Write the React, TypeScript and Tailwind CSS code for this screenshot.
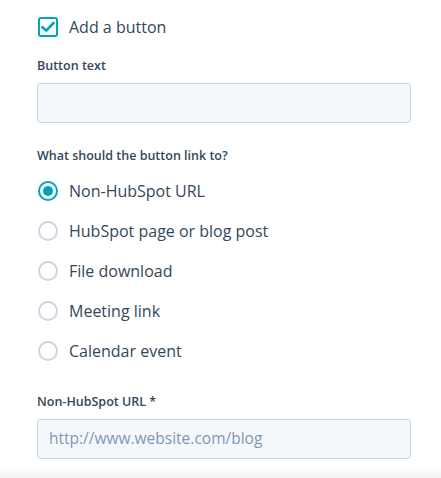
import React from 'react'

const options = [
    "Non-HubSpot URL",
    "HubSpot page or blog post",
    "File download",
    "Meeting link",
    "Calendar event",
];

const Radio = ({ checked }: { checked: boolean }) => (
    <span
        className={`flex h-5 w-5 shrink-0 items-center justify-center rounded-full border-2 bg-white ${checked ? "border-[#00a4bd]" : "border-[#cbd6e2]"}`}
    >
        {checked && <span className="h-[10px] w-[10px] rounded-full bg-[#00a4bd]" />}
    </span>
);

export default function App() {
    return (
        <div
            className="relative h-[478px] w-[441px] overflow-hidden bg-white text-[#33475b]"
            style={{ fontFamily: "'Open Sans', Lato, sans-serif" }}
        >
            <div className="flex flex-col pl-[37px] pr-[30px] pt-[17px]">
                {/* checkbox */}
                <label className="flex items-center gap-[11px] pl-[1px]">
                    <span className="flex h-5 w-5 items-center justify-center rounded-[3px] border-2 border-[#00a4bd] bg-white">
                        <svg width="14" height="12" viewBox="0 0 14 12">
                            <path d="M1.5 6.2 L5.2 9.6 L12.5 2" fill="none" stroke="#00a4bd" strokeWidth="2.6" strokeLinecap="round" strokeLinejoin="round" />
                        </svg>
                    </span>
                    <span className="text-[16px] leading-5">Add a button</span>
                </label>

                <div className="mt-[21px] text-[12.5px] font-semibold leading-4">Button text</div>
                <div className="mt-[9px] h-10 w-[374px] rounded-[3px] border border-[#cbd6e2] bg-[#f5f8fa]" />

                <div className="mt-[25px] text-[12.5px] font-semibold leading-4">What should the button link to?</div>

                <div className="mt-[17px] flex flex-col gap-5 pl-[1px]">
                    {options.map((o, i) => (
                        <div key={o} className="flex h-5 items-center gap-[11px]">
                            <Radio checked={i === 0} />
                            <span className="text-[16px] leading-5">{o}</span>
                        </div>
                    ))}
                </div>

                <div className="mt-[33px] text-[12.5px] font-semibold leading-4">Non-HubSpot URL *</div>
                <div className="mt-[9px] flex h-10 w-[374px] items-center rounded-[3px] border border-[#cbd6e2] bg-[#f5f8fa] px-[11px] text-[15.5px] text-[#7c98b6]">
                    http://www.website.com/blog
                </div>
            </div>
            <div className="absolute bottom-0 left-0 h-[12px] w-full bg-gradient-to-b from-white to-[#f2f2f2]" />
        </div>
    )
}
